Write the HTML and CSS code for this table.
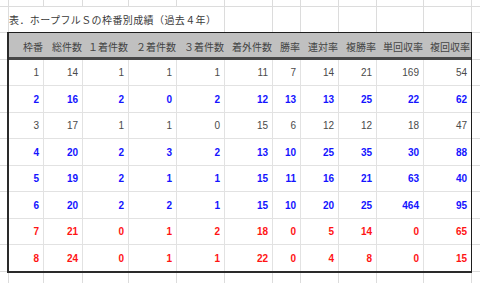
FILE: index.html
```html
<!DOCTYPE html>
<html lang="ja">
<head>
<meta charset="utf-8">
<title>ホープフルSの枠番別成績</title>
<link rel="stylesheet" href="styles.css">
</head>
<body>
<div class="sheet">
  <div class="title">表．ホープフルＳの枠番別成績（過去４年）</div>
  <div class="tbl">
    <div class="row head">
      <div class="c">枠番</div><div class="c">総件数</div><div class="c">１着件数</div><div class="c">２着件数</div><div class="c">３着件数</div><div class="c">着外件数</div><div class="c">勝率</div><div class="c">連対率</div><div class="c">複勝率</div><div class="c">単回収率</div><div class="c">複回収率</div>
    </div>
    <div class="row odd plain">
      <div class="c">1</div><div class="c">14</div><div class="c">1</div><div class="c">1</div><div class="c">1</div><div class="c">11</div><div class="c">7</div><div class="c">14</div><div class="c">21</div><div class="c">169</div><div class="c">54</div>
    </div>
    <div class="row even blue">
      <div class="c">2</div><div class="c">16</div><div class="c">2</div><div class="c">0</div><div class="c">2</div><div class="c">12</div><div class="c">13</div><div class="c">13</div><div class="c">25</div><div class="c">22</div><div class="c">62</div>
    </div>
    <div class="row odd plain">
      <div class="c">3</div><div class="c">17</div><div class="c">1</div><div class="c">1</div><div class="c">0</div><div class="c">15</div><div class="c">6</div><div class="c">12</div><div class="c">12</div><div class="c">18</div><div class="c">47</div>
    </div>
    <div class="row even blue">
      <div class="c">4</div><div class="c">20</div><div class="c">2</div><div class="c">3</div><div class="c">2</div><div class="c">13</div><div class="c">10</div><div class="c">25</div><div class="c">35</div><div class="c">30</div><div class="c">88</div>
    </div>
    <div class="row odd blue">
      <div class="c">5</div><div class="c">19</div><div class="c">2</div><div class="c">1</div><div class="c">1</div><div class="c">15</div><div class="c">11</div><div class="c">16</div><div class="c">21</div><div class="c">63</div><div class="c">40</div>
    </div>
    <div class="row even blue">
      <div class="c">6</div><div class="c">20</div><div class="c">2</div><div class="c">2</div><div class="c">1</div><div class="c">15</div><div class="c">10</div><div class="c">20</div><div class="c">25</div><div class="c">464</div><div class="c">95</div>
    </div>
    <div class="row odd red">
      <div class="c">7</div><div class="c">21</div><div class="c">0</div><div class="c">1</div><div class="c">2</div><div class="c">18</div><div class="c">0</div><div class="c">5</div><div class="c">14</div><div class="c">0</div><div class="c">65</div>
    </div>
    <div class="row last red">
      <div class="c">8</div><div class="c">24</div><div class="c">0</div><div class="c">1</div><div class="c">1</div><div class="c">22</div><div class="c">0</div><div class="c">4</div><div class="c">8</div><div class="c">0</div><div class="c">15</div>
    </div>
  </div>
</div>
</body>
</html>
```

FILE: styles.css
```css
html, body {
  margin: 0;
  padding: 0;
  background: #fff;
}

.sheet {
  width: 480px;
  height: 283px;
  box-sizing: border-box;
  padding-top: 7px;
  overflow: hidden;
  background-color: #fff;
  background-image:
    linear-gradient(to right,
      transparent 8px, #dcdcdc 8px 9px,
      transparent 9px 43px, #dcdcdc 43px 44px,
      transparent 44px 82px, #dcdcdc 82px 83px,
      transparent 83px 128px, #dcdcdc 128px 129px,
      transparent 129px 176px, #dcdcdc 176px 177px,
      transparent 177px 224px, #dcdcdc 224px 225px,
      transparent 225px 272px, #dcdcdc 272px 273px,
      transparent 273px 300px, #dcdcdc 300px 301px,
      transparent 301px 338px, #dcdcdc 338px 339px,
      transparent 339px 376px, #dcdcdc 376px 377px,
      transparent 377px 423px, #dcdcdc 423px 424px,
      transparent 424px 471px, #dcdcdc 471px 472px,
      transparent 472px),
    linear-gradient(to bottom,
      #dcdcdc 0 1px, transparent 1px 26px,
      #dcdcdc 26px 27px, transparent 27px 53px);
  background-size: 100% 100%, 100% 53px;
  background-position: 0 0, 0 6px;
  background-repeat: no-repeat, repeat-y;
  font-family: "Noto Sans CJK JP", sans-serif;
}

.title {
  width: 215px;
  height: 25px;
  margin-left: 9px;
  background: #fff;
  display: flex;
  align-items: center;
  font-size: 10px;
  letter-spacing: 0.4px;
  color: #3a3a3a;
  white-space: nowrap;
}

.tbl {
  margin-left: 7px;
  width: 465px;
  box-sizing: border-box;
  border-top: 1px solid #1e1e1e;
  border-left: 2px solid #2a2a2a;
  border-right: 1px solid #1e1e1e;
  border-bottom: 2px solid #2a2a2a;
  background: #fff;
  display: flex;
  flex-direction: column;
}

.row {
  display: grid;
  grid-template-columns: 35px 39px 46px 48px 48px 48px 28px 38px 38px 47px 47px;
}

.row .c {
  box-sizing: border-box;
  display: flex;
  align-items: center;
  justify-content: flex-end;
  white-space: nowrap;
  border-right: 1px solid #e2e2e2;
  border-bottom: 1px solid #e2e2e2;
  padding-right: 4px;
  font-family: "Liberation Sans", "Noto Sans CJK JP", sans-serif;
  font-size: 10px;
}

.row .c:last-child {
  border-right: 0;
}

.row.odd { height: 26px; }
.row.even { height: 27px; }
.row.last { height: 26px; }
.row.last .c { border-bottom: 0; }

.row.head {
  height: 27px;
  background: #c0c0c0;
}

.row.head .c {
  border-right: 0;
  border-bottom: 3px solid #474747;
  padding-right: 1px;
  padding-top: 2px;
  font-family: "Noto Sans CJK JP", sans-serif;
  font-size: 10px;
  color: #444;
}

.plain .c { color: #4a4a4a; }
.blue .c { color: #1414ff; font-weight: bold; }
.red .c { color: #ff1414; font-weight: bold; }
```
